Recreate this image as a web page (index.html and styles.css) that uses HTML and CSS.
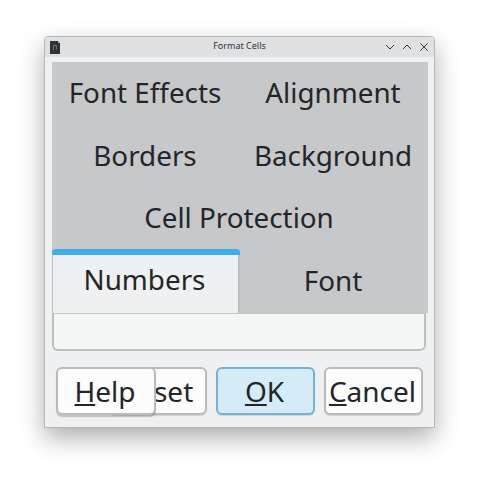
FILE: index.html
```html
<!DOCTYPE html>
<html lang="en">
<head>
<meta charset="utf-8">
<title>Format Cells</title>
<link rel="stylesheet" href="styles.css">
</head>
<body>
<div class="window">
  <header class="titlebar">
    <svg class="app-icon" width="10" height="13" viewBox="0 0 10 13"><path d="M0 0H8L10 2V13H0Z" fill="#2f3336"/><path d="M3.5 4.5H6.5V8.5M3.5 4.5V9.5" fill="none" stroke="#6d7175" stroke-width="1"/><path d="M8 0V2H10Z" fill="#b9bbbd"/></svg>
    <span class="title">Format Cells</span>
    <div class="controls">
      <svg width="10" height="10" viewBox="0 0 10 10"><path d="M1 3L5 7L9 3" fill="none" stroke="#33383c" stroke-width="1"/></svg>
      <svg width="10" height="10" viewBox="0 0 10 10"><path d="M1 7L5 3L9 7" fill="none" stroke="#33383c" stroke-width="1"/></svg>
      <svg width="10" height="10" viewBox="0 0 10 10"><path d="M1.5 1.5L8.5 8.5M8.5 1.5L1.5 8.5" fill="none" stroke="#33383c" stroke-width="1"/></svg>
    </div>
  </header>
  <main class="body">
    <div class="tabwidget">
      <div class="tabs">
        <div class="tab">Font Effects</div>
        <div class="tab">Alignment</div>
        <div class="tab">Borders</div>
        <div class="tab">Background</div>
        <div class="tab wide">Cell Protection</div>
        <div class="tab active">Numbers</div>
        <div class="tab">Font</div>
      </div>
      <div class="pane"></div>
    </div>
    <div class="buttons">
      <button class="btn help"><u>H</u>elp</button>
      <button class="btn reset">Reset</button>
      <button class="btn ok"><u>O</u>K</button>
      <button class="btn cancel"><u>C</u>ancel</button>
    </div>
  </main>
</div>
</body>
</html>
```
FILE: styles.css
```css
* { box-sizing: border-box; }
html, body { margin: 0; padding: 0; background: #fff; }
body { width: 479px; height: 480px; padding: 36px 0 0 44px; font-family: "Noto Sans", sans-serif; color: #232629; }
.window {
  width: 391px; height: 392px;
  border: 1px solid #b4b6b8; border-radius: 4px 4px 0 0;
  background: #eff0f1;
  box-shadow: 0 10px 24px rgba(0,0,0,.32);
  display: flex; flex-direction: column;
}
.titlebar {
  height: 20px; flex: none; background: #dee0e2;
  display: flex; align-items: center; padding: 0 5px; position: relative;
  border-radius: 3px 3px 0 0;
}
.app-icon { flex: none; }
.title { position: absolute; left: 0; right: 0; top: 3px; text-align: center; font-size: 9px; line-height: 12px; color: #2f3337; }
.controls { margin-left: auto; display: flex; gap: 7px; position: relative; }
.body { flex: 1; padding: 5px 6px 0 7px; display: flex; flex-direction: column; }
.tabwidget { display: flex; flex-direction: column; width: 376px; }
.tabs { display: grid; grid-template-columns: 188px 188px; grid-auto-rows: 62.75px; background: #c7c8ca; }
.tab { display: flex; align-items: center; justify-content: center; font-size: 27.8px; line-height: 1; padding: 0 2px 1px 0; }
.tab.wide { grid-column: 1 / span 2; }
.tab.active {
  background: #eff0f1; border-left: 1px solid #bcbebf; border-right: 2px solid #bcbebf;
  position: relative; margin-top: -1px; padding-bottom: 2px;
}
.tab.active::before {
  content: ""; position: absolute; left: -1px; right: -2px; top: 0; height: 6px;
  background: #3daee9; border-radius: 4px 4px 0 0;
}
.pane {
  width: 374px; height: 38px;
  background: #f4f5f5; border: 2px solid #bcbebf; border-top: 1px solid #c4c5c7; border-radius: 0 0 6px 6px;
}
.buttons { position: relative; display: flex; justify-content: flex-end; gap: 9px; margin-top: 16px; padding-right: 5px; width: 376px; }
.btn {
  font: inherit; font-size: 28px; line-height: 1; color: #232629; height: 48px; width: 99px; padding: 0 2px 0 0;
  background: #fcfcfc; border: 2px solid #b8babb; border-radius: 6px; box-shadow: 0 1px 1px rgba(0,0,0,.12);
  white-space: nowrap;
}
.reset { width: 98px; }
.ok { background: #d5ebf8; border-color: #74b2d4; }
.help { position: absolute; left: 4px; top: 0; width: 100px; z-index: 1; box-shadow: 0 2px 1px rgba(0,0,0,.2); }
```
